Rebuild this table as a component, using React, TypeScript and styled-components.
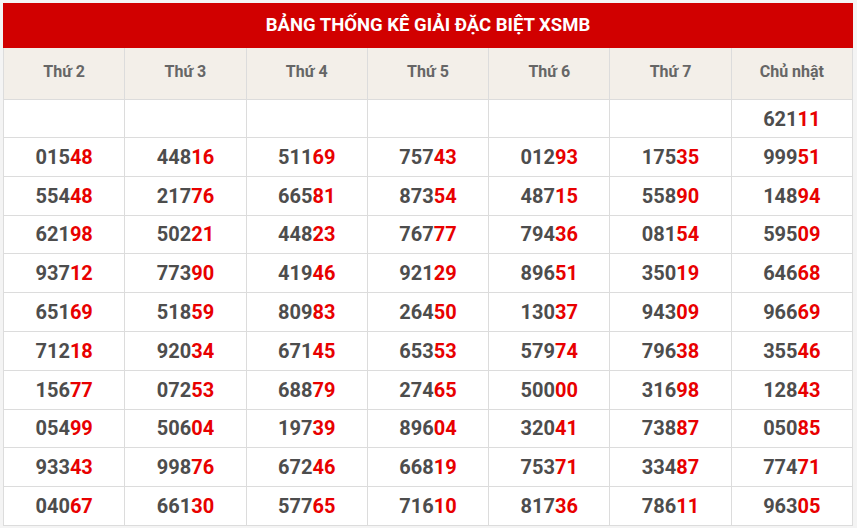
import React from "react";
import styled, { createGlobalStyle } from "styled-components";

const days = ["Thứ 2", "Thứ 3", "Thứ 4", "Thứ 5", "Thứ 6", "Thứ 7", "Chủ nhật"];

const rows: string[][] = [
  ["", "", "", "", "", "", "62111"],
  ["01548", "44816", "51169", "75743", "01293", "17535", "99951"],
  ["55448", "21776", "66581", "87354", "48715", "55890", "14894"],
  ["62198", "50221", "44823", "76777", "79436", "08154", "59509"],
  ["93712", "77390", "41946", "92129", "89651", "35019", "64668"],
  ["65169", "51859", "80983", "26450", "13037", "94309", "96669"],
  ["71218", "92034", "67145", "65353", "57974", "79638", "35546"],
  ["15677", "07253", "68879", "27465", "50000", "31698", "12843"],
  ["05499", "50604", "19739", "89604", "32041", "73887", "05085"],
  ["93343", "99876", "67246", "66819", "75371", "33487", "77471"],
  ["04067", "66130", "57765", "71610", "81736", "78611", "96305"],
];

const GlobalStyle = createGlobalStyle`
  html, body {
    margin: 0;
    padding: 0;
    background: #f4f4f4;
    font-family: Roboto, "Liberation Sans", Arial, sans-serif;
  }
`;

const Page = styled.div`
  padding: 3px 4px 0 3px;
`;

const Table = styled.table`
  width: 850px;
  border-collapse: collapse;
  table-layout: fixed;
  background: #fff;
  border: 1px solid #dcdcdc;
`;

const Title = styled.th`
  height: 41px;
  padding: 0 0 2px;
  background: #d10000;
  color: #fff;
  font-size: 18.5px;
  font-weight: 700;
  text-align: center;
  border: 1px solid #d10000;
`;

const DayCell = styled.th`
  height: 46px;
  padding: 0 0 5px;
  background: #f3efe9;
  color: #666;
  font-size: 16px;
  font-weight: 700;
  text-align: center;
  border: 1px solid #dcdcdc;
`;

const Cell = styled.td<{ $first?: boolean }>`
  height: ${(p) => (p.$first ? "37px" : "37.8px")};
  padding: 0;
  text-align: center;
  font-size: 20px;
  font-weight: 700;
  color: #4d4d4d;
  border: 1px solid #dcdcdc;
`;

const Tail = styled.span`
  color: #e80000;
`;

const App = () => {
  return (
    <>
      <GlobalStyle />
      <Page>
        <Table>
          <thead>
            <tr>
              <Title colSpan={7}>BẢNG THỐNG KÊ GIẢI ĐẶC BIỆT XSMB</Title>
            </tr>
            <tr>
              {days.map((d) => (
                <DayCell key={d}>{d}</DayCell>
              ))}
            </tr>
          </thead>
          <tbody>
            {rows.map((row, i) => (
              <tr key={i}>
                {row.map((num, j) => (
                  <Cell key={j} $first={i === 0}>
                    {num && (
                      <>
                        {num.slice(0, 3)}
                        <Tail>{num.slice(3)}</Tail>
                      </>
                    )}
                  </Cell>
                ))}
              </tr>
            ))}
          </tbody>
        </Table>
      </Page>
    </>
  );
};

export default App;
